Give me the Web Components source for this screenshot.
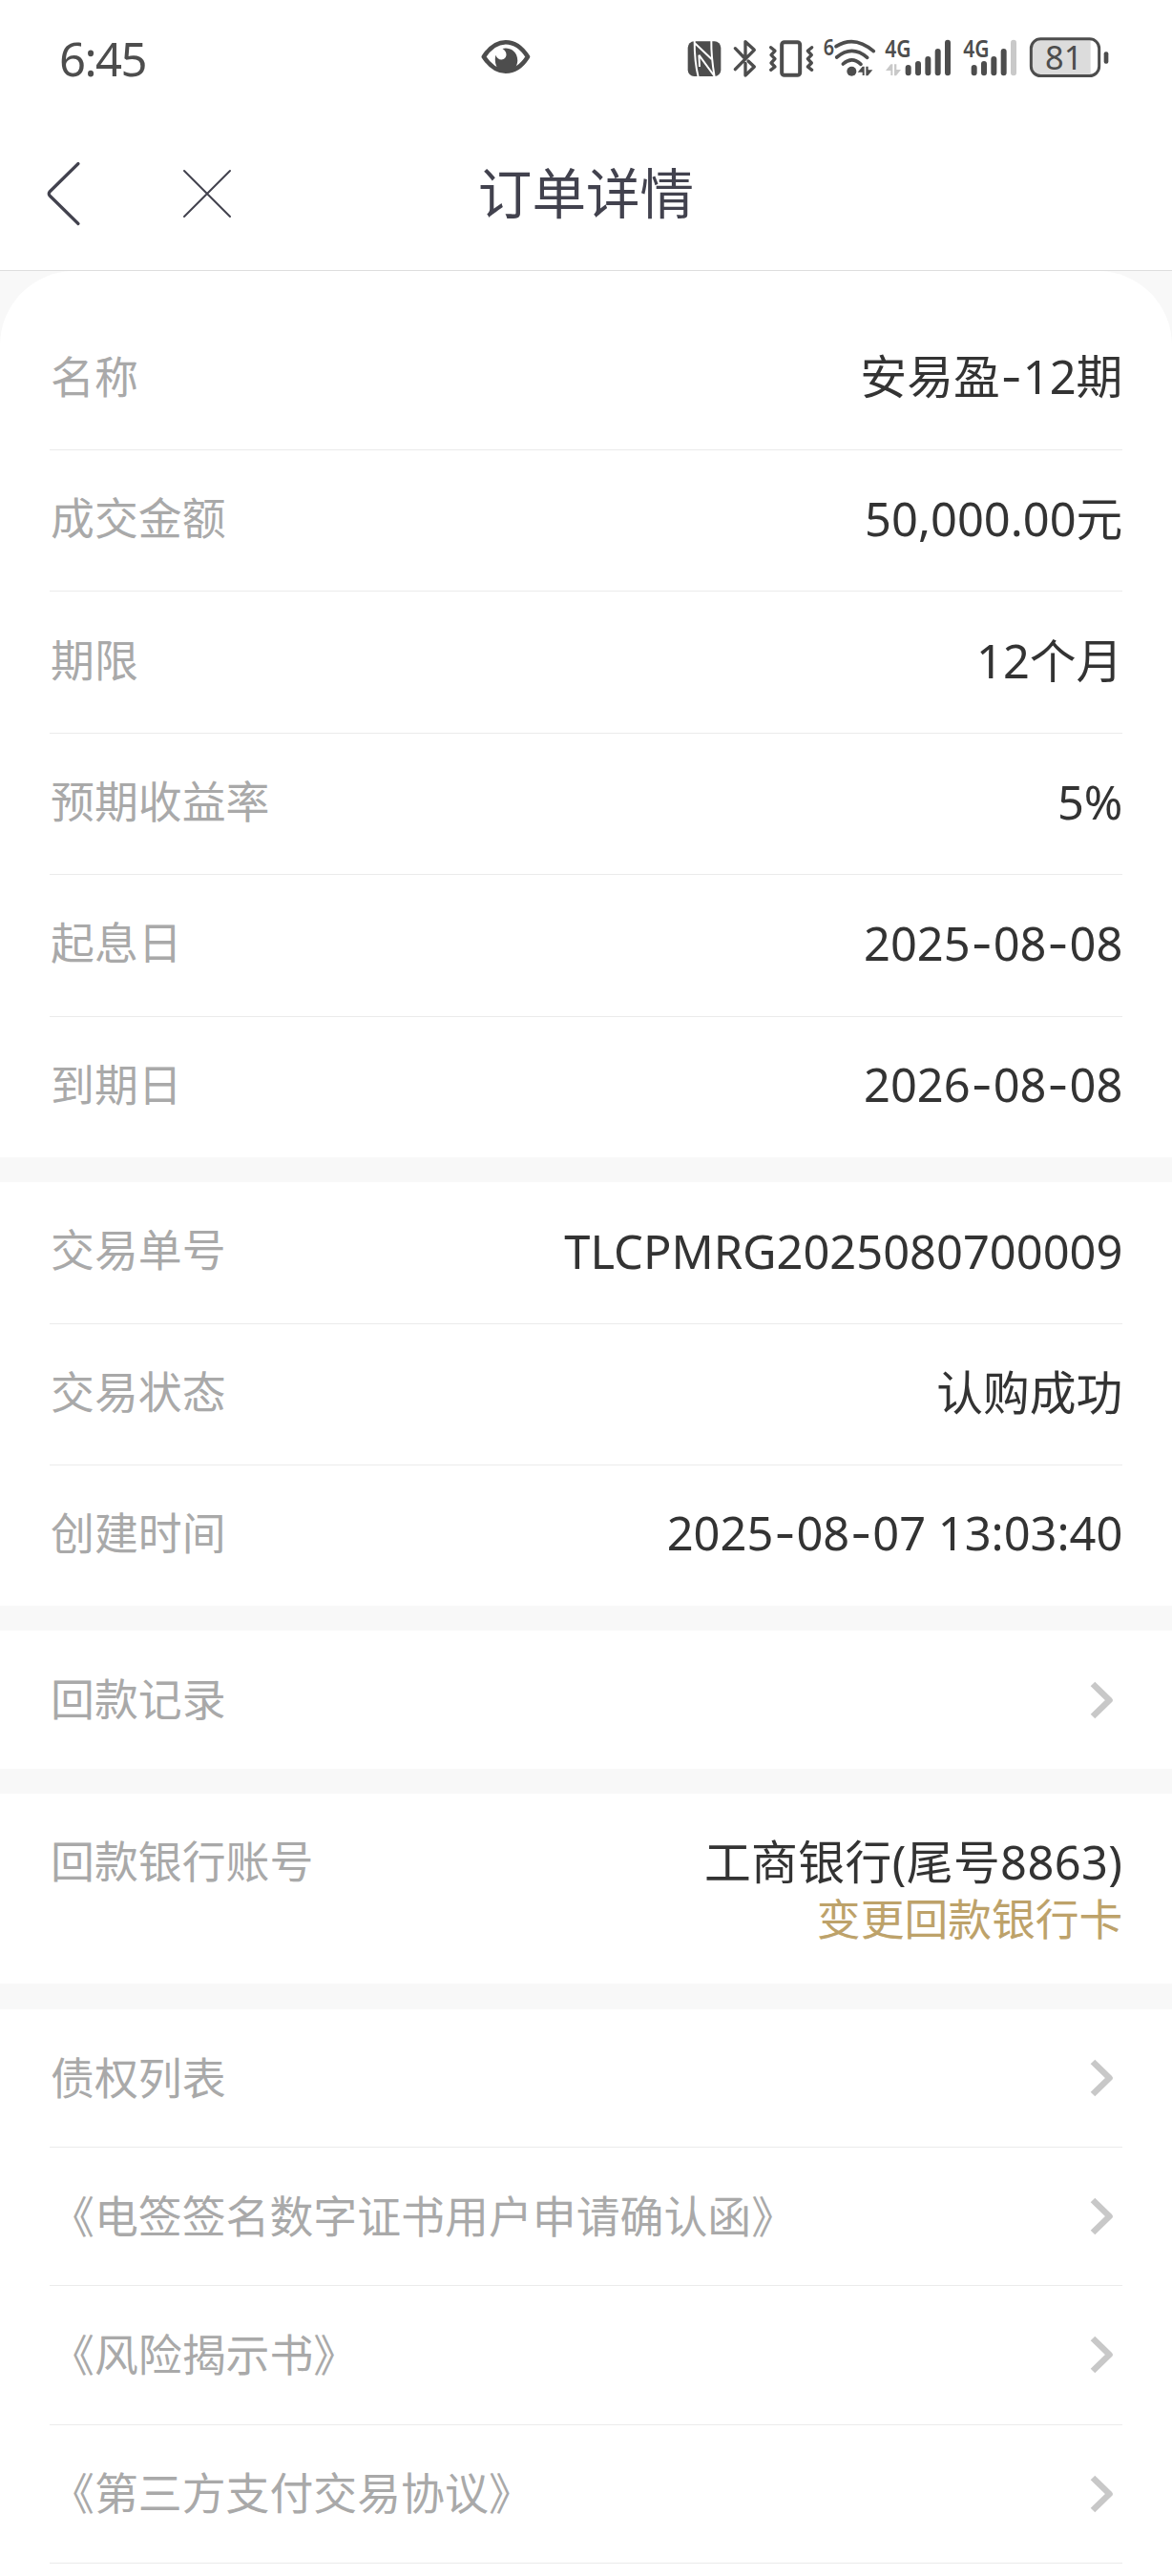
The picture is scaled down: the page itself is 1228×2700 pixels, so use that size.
<!DOCTYPE html>
<html lang="zh-CN">
<head>
<meta charset="UTF-8">
<title>订单详情</title>
<style>
  body {
    margin: 0;
    background: #fff;
    font-family: "Noto Sans", "Noto Sans CJK SC", sans-serif;
    color: #333;
  }
</style>
</head>
<body>
<order-page>
  <status-bar slot="top" time="6:45" battery="81"></status-bar>
  <nav-header slot="top">订单详情</nav-header>

  <detail-group rounded>
    <detail-row label="名称" value="安易盈-12期"></detail-row>
    <detail-row label="成交金额" value="50,000.00元"></detail-row>
    <detail-row label="期限" value="12个月"></detail-row>
    <detail-row label="预期收益率" value="5%"></detail-row>
    <detail-row label="起息日" value="2025-08-08"></detail-row>
    <detail-row label="到期日" value="2026-08-08" last></detail-row>
  </detail-group>

  <detail-group>
    <detail-row label="交易单号" value="TLCPMRG2025080700009"></detail-row>
    <detail-row label="交易状态" value="认购成功"></detail-row>
    <detail-row label="创建时间" value="2025-08-07 13:03:40" last></detail-row>
  </detail-group>

  <detail-group>
    <link-row last>回款记录</link-row>
  </detail-group>

  <detail-group>
    <bank-row label="回款银行账号" value="工商银行(尾号8863)">变更回款银行卡</bank-row>
  </detail-group>

  <detail-group>
    <link-row>债权列表</link-row>
    <link-row>《电签签名数字证书用户申请确认函》</link-row>
    <link-row>《风险揭示书》</link-row>
    <link-row>《第三方支付交易协议》</link-row>
  </detail-group>
</order-page>

<script>
class OrderPage extends HTMLElement {
  constructor() {
    super();
    this.attachShadow({ mode: 'open' }).innerHTML = `
    <style>
      :host { display: block; height: 2700px; overflow: hidden; background: #fff; }
      main { display: flex; flex-direction: column; gap: 26.2px; background: #f8f8f8; }
    </style>
    <slot name="top"></slot>
    <main><slot></slot></main>
    `;
  }
}

class StatusBar extends HTMLElement {
  connectedCallback() {
    const time = this.getAttribute('time');
    const battery = this.getAttribute('battery');

    this.attachShadow({ mode: 'open' }).innerHTML = `
    <style>
      :host {
        display: flex; align-items: center; box-sizing: border-box;
        height: 122px; padding: 0 66px 2px 62px; color: #4d4d4d;
      }
      .time { width: 442px; padding-top: 2px; font-size: 49px; line-height: 60px; letter-spacing: -1.6px; }
      .icons { display: flex; margin-left: auto; }
      svg { display: block; overflow: visible; fill: currentColor; }
      .line { fill: none; stroke: currentColor; stroke-linecap: round; stroke-linejoin: round; }
      .cut { fill: none; stroke: #fff; }
      .faded { color: #c9c9c9; }
      text { font-family: "Noto Sans", sans-serif; }
    </style>

    <span class="time">${time}</span>

    <!-- eye comfort -->
    <svg width="52" height="38" viewBox="504 43 52 38">
      <path class="line" stroke-width="4.6" d="M506.8 61.5C513 52 521 46.2 529.8 46.2S547 52 553 61.5C547 71 539 76.8 529.8 76.8S513 71 506.8 61.5Z"/>
      <path d="M526.5 53C531 51 542.3 53.5 542.3 65.5Q542 71 538.5 75L529.8 78L522 75Q517.5 68 519.3 59.8Q521.5 64.8 525.5 64.6C531.5 64 532.5 56.5 526.5 53Z"/>
    </svg>

    <div class="icons">
      <!-- nfc -->
      <svg width="48" height="72" viewBox="60 12 144 216">
        <rect x="62" y="70" width="104" height="110" rx="20"/>
        <path class="cut" stroke-width="6" d="M83 68Q83 135 95 182M136 68Q135 115 146 182M84 76L137 126M97 113L146 180M97 113L99 150"/>
      </svg>
      <!-- bluetooth -->
      <svg width="36" height="72" viewBox="204 12 108 216">
        <path class="line" stroke-width="10" d="M211 92L238 120M211 158L271 97L243 71V113M243 139V177L271 150L252 132"/>
      </svg>
      <!-- vibrate -->
      <svg width="58" height="72" viewBox="312 12 174 216">
        <rect class="line" x="357.500" y="72.500" width="57" height="104" rx="8" stroke-width="12"/>
        <path class="line" stroke-width="10" d="M323 89L336 100L324 113L336 125L324 138L336 150L323 160M452 89L439 100L451 113L439 125L451 138L439 150L452 160"/>
      </svg>
      <!-- wifi -->
      <svg width="64" height="72" viewBox="486 12 192 216">
        <text x="488" y="113" font-size="68" font-weight="600" textLength="34" lengthAdjust="spacingAndGlyphs">6</text>
        <path class="line" stroke-width="11" stroke-linecap="butt" d="M528 86Q586 49 646 101M530 120Q578 80 626 121M550 141Q578 116 606 142"/>
        <circle cx="577" cy="164" r="15"/>
        <path d="M611 149V177H617V149L611 149L596 167H611ZM622 149V178H628L643 160H629V149Z"/>
      </svg>
      <!-- sim 1 -->
      <svg width="83" height="72" viewBox="678 12 249 216">
        <text x="682" y="120" font-size="74" font-weight="600" textLength="82" lengthAdjust="spacingAndGlyphs">4G</text>
        <path class="faded" fill="currentColor" d="M700 142V177H706V142L700 142L684 162H700ZM711 142V178H717L732 159H718V142Z"/>
        <path class="line" stroke-width="18" d="M755 153V169M786 141V169M817 126V169M848 102V169M879 74V169"/>
      </svg>
      <!-- sim 2 -->
      <svg width="69" height="72" viewBox="927 12 207 216">
        <text x="928" y="120" font-size="74" font-weight="600" textLength="82" lengthAdjust="spacingAndGlyphs">4G</text>
        <path class="line" stroke-width="18" d="M962 153V169M993 141V169M1024 126V169M1055 102V169"/>
        <path class="line faded" stroke-width="18" d="M1086 74V169"/>
      </svg>
      <!-- battery -->
      <svg width="84" height="72" viewBox="1134 12 252 216">
        <path fill="#dcdcdc" d="M1165 64H1328V178H1165Q1142 174 1142 150V92Q1142 68 1165 64Z"/>
        <rect class="line" x="1141" y="62.500" width="214" height="116" rx="30" stroke-width="9"/>
        <rect x="1370" y="103" width="14" height="37" rx="6"/>
        <text x="1244" y="160" font-size="103" text-anchor="middle">${battery}</text>
      </svg>
    </div>
    `;
  }
}

class NavHeader extends HTMLElement {
  constructor() {
    super();
    this.attachShadow({ mode: 'open' }).innerHTML = `
    <style>
      :host {
        display: grid; grid-template-columns: 1fr auto 1fr; align-items: center;
        box-sizing: border-box; height: 162px; padding: 0 48px;
        border-bottom: 1px solid #dedede; color: #42424e;
      }
      .buttons { display: flex; align-items: center; gap: 106px; }
      svg { display: block; fill: none; stroke: currentColor; stroke-linecap: round; stroke-linejoin: round; }
      h1 { margin: 0; padding-bottom: 2px; font-size: 56.6px; font-weight: 400; line-height: 80px; }
    </style>
    <div class="buttons">
      <svg width="37" height="68" viewBox="0 0 37 68" stroke-width="3.200"><path d="M34 2.500L4 32Q2.500 34 4 36L34 65.500"/></svg>
      <svg width="52" height="52" viewBox="0 0 52 52" stroke-width="2"><path d="M2 2L50 50M50 2L2 50"/></svg>
    </div>
    <h1><slot></slot></h1>
    `;
  }
}

class DetailGroup extends HTMLElement {
  constructor() {
    super();
    this.attachShadow({ mode: 'open' }).innerHTML = `
    <style>
      :host { display: block; padding: 0 51.6px 0 52px; background: #fff; }
      :host([rounded]) { padding-top: 39.6px; border-radius: 78px 78px 0 0; }
    </style>
    <slot></slot>
    `;
  }
}

// The dash comes from a wider face so dates keep their spacing
function formatValue(value) {
  return value.replaceAll('-', '<span class="dash">-</span>');
}

const rowStyles = `
  .label { padding-left: 1px; font-size: 45.9px; line-height: 60px; color: #a9a9a9; white-space: nowrap; }
  .value { font-size: 48.8px; line-height: 60px; color: #333; white-space: nowrap; }
  .dash { padding: 0 0.8px; font-family: Inter, sans-serif; }
`;

class DetailRow extends HTMLElement {
  connectedCallback() {
    this.attachShadow({ mode: 'open' }).innerHTML = `
    <style>
      ${rowStyles}
      :host {
        display: flex; justify-content: space-between; align-items: center;
        box-sizing: border-box; height: 148.4px; padding-bottom: 7px;
        border-bottom: 1px solid #ebebeb;
      }
      :host([last]) { height: 147.4px; border-bottom: 0; }
      .value { padding-top: 2.5px; }
    </style>
    <span class="label">${this.getAttribute('label')}</span>
    <span class="value">${formatValue(this.getAttribute('value'))}</span>
    `;
  }
}

class BankRow extends HTMLElement {
  connectedCallback() {
    this.attachShadow({ mode: 'open' }).innerHTML = `
    <style>
      ${rowStyles}
      :host {
        display: flex; justify-content: space-between; align-items: flex-start;
        box-sizing: border-box; height: 199.4px; padding-top: 40px;
      }
      .account { display: flex; flex-direction: column; align-items: flex-end; padding-top: 1px; }
      .value { letter-spacing: 0.4px; }
      .change { font-size: 45.8px; line-height: 60px; color: #bda26a; }
    </style>
    <span class="label">${this.getAttribute('label')}</span>
    <div class="account">
      <span class="value">${formatValue(this.getAttribute('value'))}</span>
      <span class="change"><slot></slot></span>
    </div>
    `;
  }
}

class LinkRow extends HTMLElement {
  constructor() {
    super();
    this.attachShadow({ mode: 'open' }).innerHTML = `
    <style>
      ${rowStyles}
      :host {
        display: flex; justify-content: space-between; align-items: center;
        box-sizing: border-box; height: 145.3px; padding-right: 9px;
        border-bottom: 1px solid #ebebeb;
      }
      :host([last]) { height: 144.4px; border-bottom: 0; }
      .label { padding-bottom: 2.5px; }
      svg { display: block; fill: none; stroke: #c8c8c8; stroke-width: 6.6; stroke-linejoin: round; }
    </style>
    <span class="label"><slot></slot></span>
    <svg width="25" height="40" viewBox="0 0 25 40"><path d="M3 3L20.500 20L3 37"/></svg>
    `;
  }
}

customElements.define('order-page', OrderPage);
customElements.define('status-bar', StatusBar);
customElements.define('nav-header', NavHeader);
customElements.define('detail-group', DetailGroup);
customElements.define('detail-row', DetailRow);
customElements.define('bank-row', BankRow);
customElements.define('link-row', LinkRow);
</script>
</body>
</html>
